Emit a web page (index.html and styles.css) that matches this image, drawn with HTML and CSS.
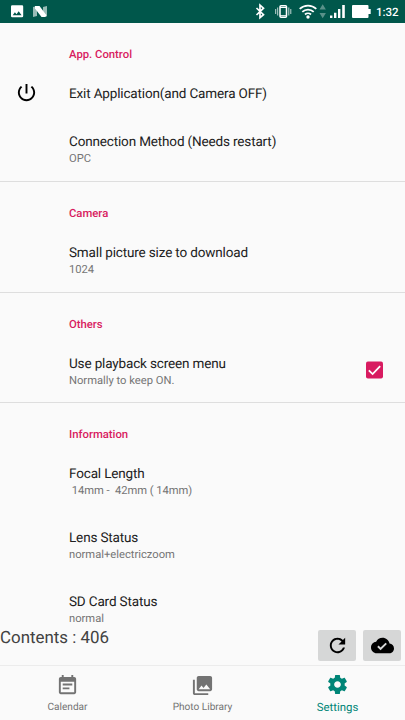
FILE: index.html
```html
<!DOCTYPE html>
<html lang="en">
<head>
<meta charset="utf-8">
<title>Settings</title>
<link rel="stylesheet" href="styles.css">
</head>
<body>
<div class="screen">
  <header class="status-bar">
    <svg width="405" height="23" viewBox="0 0 405 23" fill="#fff">
      <path fill-rule="evenodd" d="M12.2 5.3h9.8q1.2 0 1.2 1.2v9.6q0 1.2-1.2 1.2h-9.8q-1.200 0-1.200-1.200V6.500q0-1.200 1.200-1.200zM12.700 15.200h8.900l-2.900-3.900-2.200 2.900-1.600-1.900z"/>
      <path opacity=".6" d="M33 7l4-1v10l-4 1zM43 7l4-1v9l-4 2z"/>
      <path d="M35 6h4.500l7.500 10-2 1h-3.500L35 8.500z"/>
      <path d="M256.500 8l7 6.700-3.500 3V5.200l3.500 3-7 6.800" fill="none" stroke="#fff" stroke-width="1.700"/>
      <g fill="none" stroke="#fff">
        <rect x="280" y="5.800" width="6.500" height="11.500" rx="1" stroke-width="1.500"/>
        <path d="M280 7.500h6.500M280 15.700h6.500" stroke-width="1"/>
        <path d="M277.700 7.500v8M288.800 7.500v8M275.700 9v5M290.800 9v5" stroke-width="1" opacity=".75"/>
        <path d="M299.700 8.900a12.200 12.200 0 0 1 16.600 0M302.300 11.800a8.300 8.300 0 0 1 11.400 0M305 14.500a4.300 4.300 0 0 1 6 0" stroke-width="1.800"/>
      </g>
      <circle cx="308" cy="17" r="1.700"/>
      <path opacity=".35" d="M319.500 9.500l3.200-5.200 3.200 5.200zM319.500 13l3.200 5.200 3.200-5.200z"/>
      <path d="M330 15.500h2.400V18H330zM334 12.800h2.400V18H334zM338 9h2.400v9H338zM342.200 5h2.600v13h-2.600z"/>
      <path d="M353 5h14.500q1 0 1 1v3h2.200v5h-2.200v3q0 1-1 1H353q-1 0-1-1V6q0-1 1-1z"/>
    </svg>
    <span class="clock">1:32</span>
  </header>

  <main class="settings">
    <section class="group">
      <h2>App. Control</h2>
      <div class="row single">
        <svg class="power" viewBox="0 0 24 24"><path d="M13 3h-2v10h2V3zm4.830 2.170l-1.420 1.420C17.990 7.860 19 9.810 19 12c0 3.870-3.130 7-7 7s-7-3.130-7-7c0-2.190 1.010-4.140 2.580-5.420L6.170 5.170C4.230 6.820 3 9.260 3 12c0 4.970 4.030 9 9 9s9-4.030 9-9c0-2.740-1.230-5.180-3.170-6.830z"/></svg>
        <h3>Exit Application(and Camera OFF)</h3>
      </div>
      <div class="row"><h3>Connection Method (Needs restart)</h3><p>OPC</p></div>
    </section>
    <section class="group">
      <h2>Camera</h2>
      <div class="row"><h3>Small picture size to download</h3><p>1024</p></div>
    </section>
    <section class="group">
      <h2>Others</h2>
      <div class="row">
        <h3>Use playback screen menu</h3><p>Normally to keep ON.</p>
        <svg class="check" viewBox="0 0 18 18"><rect width="18" height="18" rx="2" fill="#d81b60"/><path d="M3 9.300l4 4 8-8.300" fill="none" stroke="#fff" stroke-width="1.900"/></svg>
      </div>
    </section>
    <section class="group">
      <h2>Information</h2>
      <div class="row"><h3>Focal Length</h3><p class="pre"> 14mm -  42mm ( 14mm)</p></div>
      <div class="row"><h3>Lens Status</h3><p>normal+electriczoom</p></div>
      <div class="row"><h3>SD Card Status</h3><p>normal</p></div>
    </section>
  </main>

  <div class="footer-bar">
    <span class="contents">Contents : 406</span>
    <button aria-label="Refresh"><svg viewBox="0 0 24 24"><path d="M17.650 6.350C16.200 4.900 14.210 4 12 4c-4.420 0-7.990 3.580-7.990 8s3.570 8 7.990 8c3.730 0 6.840-2.550 7.730-6h-2.080c-.82 2.330-3.040 4-5.650 4-3.310 0-6-2.690-6-6s2.690-6 6-6c1.660 0 3.140.69 4.220 1.780L13 11h7V4l-2.350 2.350z"/></svg></button>
    <button aria-label="Downloaded"><svg viewBox="0 0 24 24"><path d="M19.350 10.040C18.670 6.590 15.640 4 12 4 9.110 4 6.600 5.640 5.350 8.040 2.340 8.360 0 10.910 0 14c0 3.310 2.690 6 6 6h13c2.760 0 5-2.240 5-5 0-2.640-2.050-4.780-4.650-4.960zM10 17l-3.500-3.500 1.410-1.410L10 14.170 15.180 9l1.410 1.410L10 17z"/></svg></button>
  </div>

  <nav class="tabs">
    <div class="tab"><svg viewBox="0 0 24 24"><path d="M17 10H7v2h10v-2zm2-7h-1V1h-2v2H8V1H6v2H5c-1.110 0-1.990.9-1.990 2L3 19c0 1.100.89 2 2 2h14c1.100 0 2-.9 2-2V5c0-1.100-.9-2-2-2zm0 16H5V8h14v11zm-5-5H7v2h7v-2z"/></svg><span>Calendar</span></div>
    <div class="tab"><svg viewBox="0 0 24 24"><path d="M22 16V4c0-1.100-.9-2-2-2H8c-1.100 0-2 .9-2 2v12c0 1.100.9 2 2 2h12c1.100 0 2-.9 2-2zm-11-4l2.030 2.710L16 11l4 5H8l3-4zM2 6v14c0 1.100.9 2 2 2h14v-2H4V6H2z"/></svg><span>Photo Library</span></div>
    <div class="tab active"><svg viewBox="0 0 24 24"><path d="M19.430 12.980c.04-.32.07-.64.07-.98s-.03-.66-.07-.98l2.110-1.650c.19-.15.24-.42.12-.64l-2-3.460c-.12-.22-.39-.3-.61-.22l-2.490 1c-.52-.4-1.080-.73-1.690-.98l-.38-2.650C14.460 2.180 14.250 2 14 2h-4c-.25 0-.46.18-.49.42l-.38 2.650c-.61.25-1.170.59-1.690.98l-2.490-1c-.23-.09-.49 0-.61.22l-2 3.460c-.13.22-.07.49.12.64l2.110 1.650c-.04.32-.07.65-.07.98s.03.66.07.98l-2.110 1.650c-.19.15-.24.42-.12.64l2 3.460c.12.22.39.3.61.22l2.490-1c.52.4 1.080.73 1.690.98l.38 2.650c.03.24.24.42.49.42h4c.25 0 .46-.18.49-.42l.38-2.650c.61-.25 1.170-.59 1.690-.98l2.490 1c.23.09.49 0 .61-.22l2-3.460c.12-.22.07-.49-.12-.64l-2.110-1.650zM12 15.500c-1.930 0-3.500-1.570-3.500-3.500s1.570-3.500 3.500-3.500 3.500 1.570 3.500 3.500-1.570 3.500-3.500 3.500z"/></svg><span>Settings</span></div>
  </nav>
</div>
</body>
</html>
```
FILE: styles.css
```css
* { box-sizing: border-box; }
body { margin: 0; font-family: Roboto, sans-serif; background: #fafafa; text-rendering: geometricPrecision; }
h2, h3, p { margin: 0; font-weight: 400; white-space: nowrap; }
svg { display: block; flex: none; }
.screen { width: 405px; height: 720px; display: flex; flex-direction: column; overflow: hidden; }

.status-bar { position: relative; height: 23px; flex: none; background: #00574b; }
.clock { position: absolute; left: 376px; top: 4px; font-size: 11.500px; line-height: 16px; font-weight: 500; color: #fff; }

.settings { height: 607px; flex: none; overflow: hidden; }
.group { height: 110.600px; padding-top: 23px; border-bottom: 1.500px solid #dedede; }
.group:first-child { height: 159px; }
.group:last-child { height: auto; border: 0; }
.group h2 { padding-left: 69px; height: 17px; line-height: 17px; font-size: 11.300px; font-weight: 500; color: #d81b60; }
.row { position: relative; height: 63.750px; padding: 22px 0 0 69px; }
.row h3 { font-size: 13.500px; line-height: 19px; letter-spacing: -0.150px; color: #212121; }
.row p { font-size: 11.200px; line-height: 14px; color: #757575; }
.row .pre { white-space: pre; letter-spacing: -0.050px; }
.row.single { height: 48px; }
.power { position: absolute; left: 15px; top: 18px; width: 23px; height: 23px; }
.check { position: absolute; left: 366px; top: 28px; width: 17px; height: 18px; }

.footer-bar { height: 35px; flex: none; display: flex; }
.contents { flex: 1; font-size: 16.900px; line-height: 17px; color: #424242; }
.footer-bar button { width: 38px; height: 31px; margin-right: 7px; padding: 0; border: 0; border-radius: 2px; background: #d6d7d7; display: flex; align-items: center; justify-content: center; }
.footer-bar button:last-child { margin-right: 4px; }
.footer-bar button svg { width: 23px; height: 23px; }

.tabs { flex: 1; display: flex; justify-content: center; border-top: 1px solid #ececec; }
.tab { width: 135px; padding-top: 8px; display: flex; flex-direction: column; align-items: center; color: #737373; font-size: 10.100px; line-height: 14px; }
.tab svg { width: 23px; height: 23px; fill: currentColor; }
.tab span { margin-top: 4px; }
.tab.active { padding-top: 7px; color: #008577; font-size: 11.400px; }
```
